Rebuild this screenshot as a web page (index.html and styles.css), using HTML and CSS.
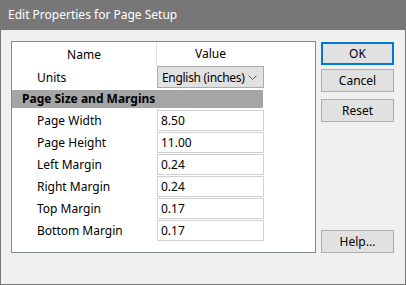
FILE: index.html
```html
<!DOCTYPE html>
<html lang="en">
<head>
  <meta charset="UTF-8">
  <title>Edit Properties for Page Setup</title>
  <link rel="stylesheet" href="styles.css">
</head>
<body>

  <div class="dialog">
    <div class="titlebar">Edit Properties for Page Setup</div>

    <div class="dialog-body">
      <div class="grid">
        <div class="row head">
          <div class="name">Name</div>
          <div class="value">Value</div>
        </div>
        <div class="row">
          <div class="label">Units</div>
          <div class="select">
            <span>English (inches)</span>
            <svg width="9" height="5" viewBox="0 0 9 5"><path d="M0.5 0.5 L4.5 4.5 L8.5 0.5" fill="none" stroke="#606060" stroke-width="1"/></svg>
          </div>
        </div>
        <div class="section">Page Size and Margins</div>
        <div class="row field">
          <div class="label">Page Width</div>
          <div class="input">8.50</div>
        </div>
        <div class="row field">
          <div class="label">Page Height</div>
          <div class="input">11.00</div>
        </div>
        <div class="row field">
          <div class="label">Left Margin</div>
          <div class="input">0.24</div>
        </div>
        <div class="row field">
          <div class="label">Right Margin</div>
          <div class="input">0.24</div>
        </div>
        <div class="row field">
          <div class="label">Top Margin</div>
          <div class="input">0.17</div>
        </div>
        <div class="row field">
          <div class="label">Bottom Margin</div>
          <div class="input">0.17</div>
        </div>
      </div>

      <div class="buttons">
        <button class="btn default">OK</button>
        <button class="btn cancel">Cancel</button>
        <button class="btn reset">Reset</button>
        <button class="btn help">Help...</button>
      </div>
    </div>
  </div>

</body>
</html>
```

FILE: styles.css
```css
body {
  margin: 0;
  font-family: "Noto Sans", "Open Sans", sans-serif;
  font-size: 12px;
  color: #000;
  background: #f0f0f0;
}

.dialog {
  width: 404px;
  height: 284px;
  border: 1px solid #777;
  border-top: none;
  background: #f0f0f0;
}

.titlebar {
  height: 30px;
  line-height: 30px;
  padding-left: 8px;
  background: #777;
  color: #fff;
  margin: 0 -1px;
}

.dialog-body {
  display: flex;
  gap: 5px;
  padding: 11px 0 0 10px;
}

/* property grid */
.grid {
  width: 303px;
  height: 210px;
  border: 1px solid #828790;
  background: #fff;
}

.row {
  display: flex;
  height: 22px;
  align-items: center;
}

.row.head {
  height: 24px;
}

.row.head .name {
  width: 144px;
  height: 24px;
  line-height: 26px;
  text-align: center;
  border-right: 1px solid #e3e3e3;
}

.row.head .value {
  width: 107px;
  line-height: 26px;
  text-align: center;
}

.label {
  width: 120px;
  padding-left: 25px;
}

.select {
  width: 107px;
  height: 22px;
  border: 1px solid #adadad;
  background: #e1e1e1;
  display: flex;
  align-items: center;
  justify-content: space-between;
  padding: 0 6px 0 4px;
  box-sizing: border-box;
  white-space: nowrap;
  letter-spacing: -0.3px;
}

.section {
  width: 251px;
  height: 18px;
  line-height: 18px;
  margin: 2px 0 2px;
  padding-left: 10px;
  box-sizing: border-box;
  background: #a5a5a5;
  font-weight: bold;
}

.row.field {
  align-items: flex-start;
}

.input {
  width: 107px;
  height: 21px;
  line-height: 19px;
  border: 1px solid #d0d0d0;
  box-sizing: border-box;
  padding-left: 3px;
}

.row.field .label {
  line-height: 21px;
}

/* buttons */
.buttons {
  display: flex;
  flex-direction: column;
  height: 212px;
}

.btn {
  width: 73px;
  height: 23px;
  font-family: inherit;
  font-size: 12px;
  background: #e1e1e1;
  border: 1px solid #adadad;
  padding: 0;
  color: #000;
}

.btn.default {
  margin-top: 1px;
  border: 2px solid #0078d7;
}

.btn.cancel {
  margin-top: 4px;
}

.btn.reset {
  margin-top: 7px;
}

.btn.help {
  margin-top: auto;
}
```
